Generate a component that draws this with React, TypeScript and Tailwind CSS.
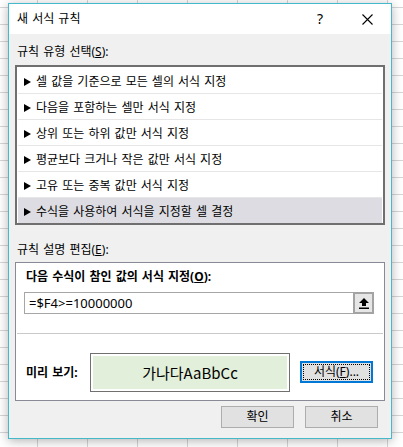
import React from "react";

const Tri = () => (
  <svg width="7" height="8" viewBox="0 0 7 8" className="shrink-0">
    <polygon points="0,0 7,4 0,8" fill="#000" />
  </svg>
);

const items = [
  "셀 값을 기준으로 모든 셀의 서식 지정",
  "다음을 포함하는 셀만 서식 지정",
  "상위 또는 하위 값만 서식 지정",
  "평균보다 크거나 작은 값만 서식 지정",
  "고유 또는 중복 값만 서식 지정",
  "수식을 사용하여 서식을 지정할 셀 결정",
];

export default function App() {
  return (
    <div className="w-[403px] h-[447px] overflow-hidden bg-white bg-[linear-gradient(#d6d6d6_1px,transparent_1px),linear-gradient(90deg,#d6d6d6_1px,transparent_1px)] bg-[size:50px_17px] bg-[position:37px_7px] pt-[3px] pl-[8px] font-['Noto_Sans','Noto_Sans_CJK_KR',sans-serif] text-black">
      <div className="w-[384px] h-[436px] border border-[#45b8cc] bg-[#f0f0f0] shadow-[0_2px_10px_rgba(0,0,0,0.3)] flex flex-col">
        {/* title bar */}
        <div className="h-[30px] bg-white flex items-center pl-[8px] shrink-0">
          <span className="text-[12px] leading-[16px] [word-spacing:1px]">새 서식 규칙</span>
          <span className="ml-auto text-[14px] leading-[16px] mr-[39px]">?</span>
          <svg width="11" height="11" viewBox="0 0 11 11" className="mr-[18px]">
            <path d="M0.5 0.5 L10.5 10.5 M10.5 0.5 L0.5 10.5" stroke="#000" strokeWidth="1.1" />
          </svg>
        </div>
        {/* body */}
        <div className="flex flex-col px-[6px] pt-[10px]">
          <div className="text-[12px] leading-[16px] ml-[2px] [word-spacing:1px]">
            규칙 유형 선택(<span className="underline">S</span>):
          </div>
          <div className="mt-[5px] h-[160px] border-2 border-[#6f6f6f] bg-white pt-[1px] px-[1px]">
            {items.map((t, i) => (
              <div
                key={i}
                className={
                  i === items.length - 1
                    ? "h-[25px] flex items-center pl-[6px] pt-[3px] gap-[5px] bg-[#dcdce2]"
                    : "h-[26px] flex items-center pl-[6px] pt-[3px] gap-[5px] border-b border-[#e6e6e6]"
                }
              >
                <Tri />
                <span className="text-[12px] leading-[16px] [word-spacing:1px]">{t}</span>
              </div>
            ))}
          </div>
          <div className="mt-[17px] text-[12px] leading-[16px] ml-[2px] [word-spacing:1px]">
            규칙 설명 편집(<span className="underline">E</span>):
          </div>
          <div className="mt-[4px] h-[139px] border border-[#8a8a96] bg-white flex flex-col">
            <div className="pt-[6px] pl-[10px] text-[12px] leading-[16px] font-bold [word-spacing:1px]">
              다음 수식이 참인 값의 서식 지정(<span className="underline">O</span>):
            </div>
            <div className="mt-[7px] ml-[8px] w-[350px] h-[22px] border border-[#a6a6a6] flex items-stretch">
              <div className="flex-1 flex items-center pl-[4px] text-[13px] leading-[16px] font-['Noto_Sans',sans-serif]">
                =$F4&gt;=10000000
              </div>
              <div className="w-[21px] border-2 border-[#a3a3a3] bg-[#e6e6e6] flex items-center justify-center -my-[1px] -mr-[1px]">
                <svg width="10" height="11" viewBox="0 0 10 11">
                  <polygon points="5,0 10,5 7,5 7,8 3,8 3,5 0,5" fill="#000" />
                  <rect x="0" y="9.5" width="10" height="1.5" fill="#000" />
                </svg>
              </div>
            </div>
            <div className="mt-[19px] mx-[1px] h-px bg-[#cacaca]" />
            <div className="mt-[19px] flex items-center">
              <div className="ml-[10px] w-[64px] text-[12px] leading-[16px] font-bold [word-spacing:1px]">미리 보기:</div>
              <div className="w-[200px] h-[39px] border border-[#707070] p-[2px] bg-white">
                <div className="w-full h-full bg-[#e2efda] flex items-center justify-center text-[15px] leading-[20px] font-normal font-['Noto_Sans_CJK_KR',sans-serif]">
                  가나다AaBbCc
                </div>
              </div>
              <div className="ml-[10px] w-[73px] h-[22px] border-2 border-[#0078d7] bg-[#e1e1e1] p-[1px] mt-[-1px]">
                <div className="w-full h-full border border-dotted border-black flex items-center justify-center text-[12px] leading-[16px]">
                  서식(<span className="underline">F</span>)...
                </div>
              </div>
            </div>
          </div>
          <div className="mt-[5px] flex justify-end gap-[11px] pr-[7px]">
            <div className="w-[73px] h-[22px] border border-[#adadad] bg-[#e1e1e1] flex items-center justify-center text-[12px] leading-[16px]">
              확인
            </div>
            <div className="w-[73px] h-[22px] border border-[#adadad] bg-[#e1e1e1] flex items-center justify-center text-[12px] leading-[16px]">
              취소
            </div>
          </div>
        </div>
      </div>
    </div>
  );
}
